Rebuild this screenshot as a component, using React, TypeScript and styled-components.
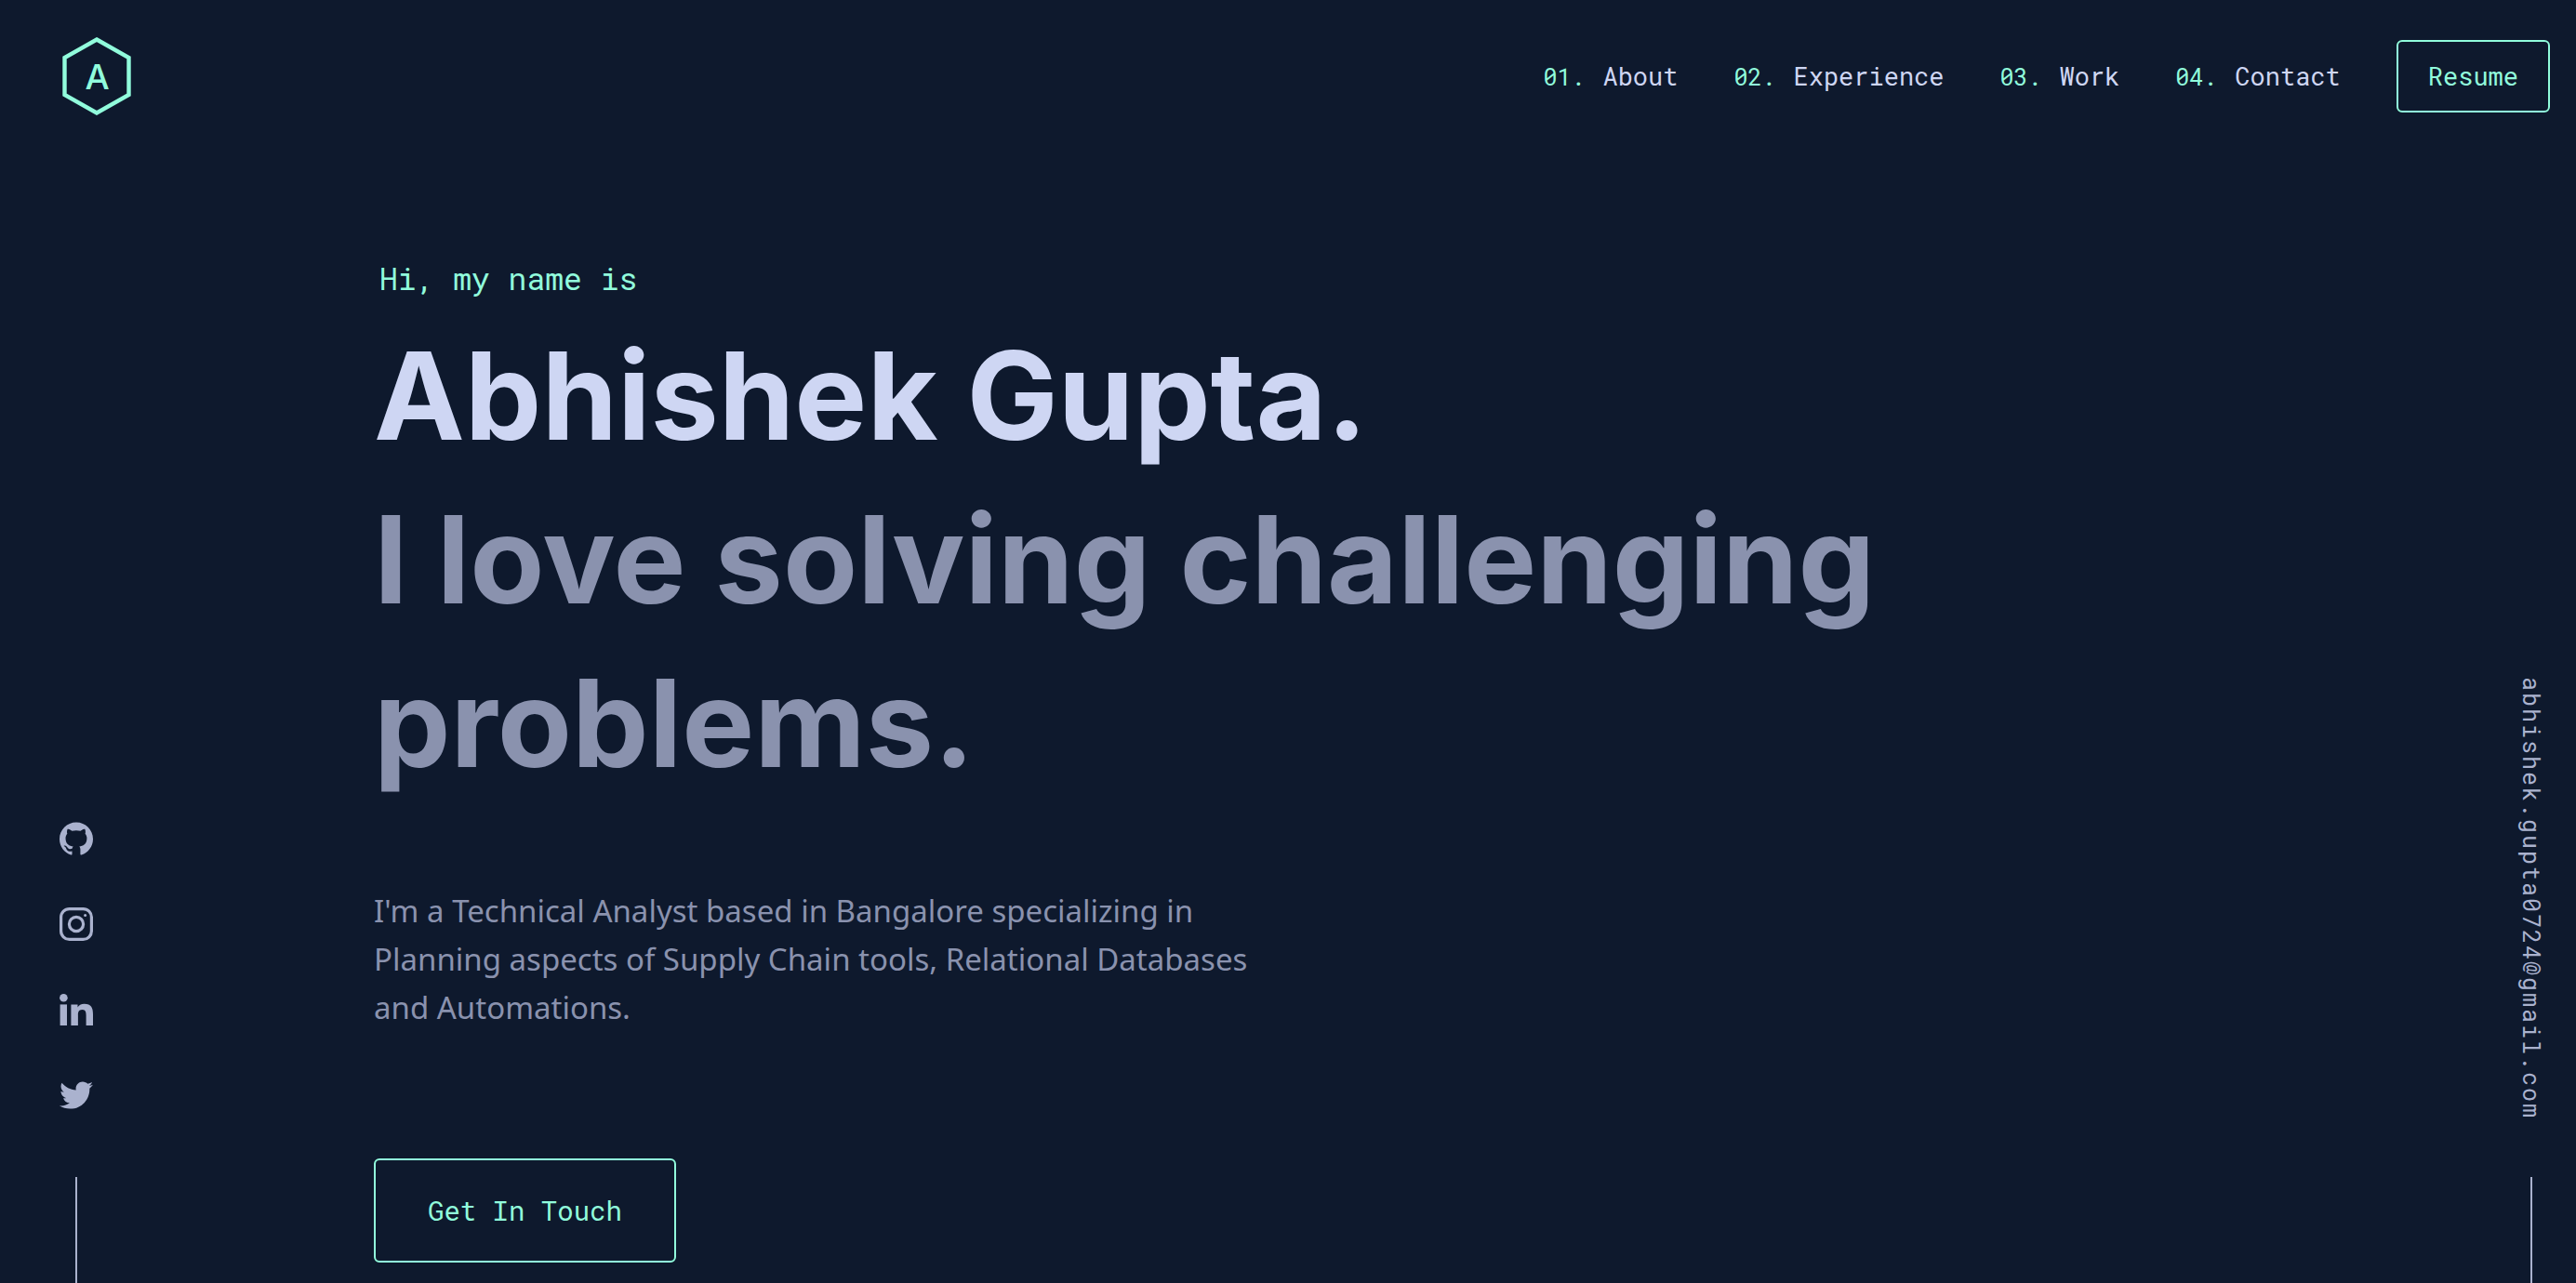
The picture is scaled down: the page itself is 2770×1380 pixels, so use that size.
import React from "react";
import styled, { createGlobalStyle } from "styled-components";
import { FaTwitter } from "react-icons/fa";
import { SiGithub } from "react-icons/si";

const color = {
  navy: "#0e192d",
  green: "#91fcdc",
  white: "#ced6f3",
  light: "#aab2ce",
  slate: "#8a92ae",
};
const mono = '"Roboto Mono", "Noto Sans Mono", "Liberation Mono", monospace';
const display = 'Inter, "Liberation Sans", sans-serif';
const body = '"Noto Sans", "Open Sans", sans-serif';

const GlobalStyle = createGlobalStyle`
  *, *::before, *::after { box-sizing: border-box; }
  body { margin: 0; background: ${color.navy}; color: ${color.slate}; font-family: ${body}; }
  a { color: inherit; text-decoration: none; }
  ul, ol { margin: 0; padding: 0; list-style: none; }
`;

const Page = styled.div`
  display: flex;
  flex-direction: column;
  min-height: 100vh;
`;

const Header = styled.header`
  display: flex;
  align-items: center;
  justify-content: space-between;
  padding: 40px 28px 40px 66px;
`;

const LogoLink = styled.a`
  display: flex;
  svg { width: 76px; height: 84px; }
`;

const Nav = styled.nav`
  display: flex;
  align-items: center;
  gap: 60px;
`;

const NavList = styled.ol`
  display: flex;
  gap: 60px;
`;

const NavLink = styled.a`
  display: flex;
  align-items: baseline;
  gap: 19px;
  font: 400 27px/36px ${mono};
  color: ${color.white};
`;

const NavNumber = styled.span`
  font-size: 25px;
  color: ${color.green};
`;

const OutlineLink = styled.a<{ $large?: boolean }>`
  display: inline-block;
  padding: ${(p) => (p.$large ? "36px 56px" : "19px 32px")};
  border: 2px solid ${color.green};
  border-radius: 6px;
  font: 400 ${(p) => (p.$large ? "29px" : "27px")}/36px ${mono};
  color: ${color.green};
`;

const Columns = styled.div`
  display: flex;
  flex: 1;
`;

const Side = styled.aside<{ $width: number; $gap: number }>`
  display: flex;
  flex: none;
  flex-direction: column;
  align-items: center;
  align-self: flex-end;
  gap: ${(p) => p.$gap}px;
  width: ${(p) => p.$width}px;

  &::after {
    content: "";
    width: 2px;
    height: 114px;
    background: ${color.light};
  }
`;

const SocialList = styled.ul`
  display: flex;
  flex-direction: column;
  gap: 56px;
`;

const SocialLink = styled.a`
  display: flex;
  color: ${color.light};
  svg { width: 36px; height: 36px; }
`;

const EmailLink = styled.a`
  writing-mode: vertical-rl;
  font: 400 25px/32px ${mono};
  letter-spacing: 2px;
  color: ${color.light};
`;

const Hero = styled.main`
  flex: 1;
  padding: 111px 306px 22px 238px;
`;

const Greeting = styled.p`
  margin: 0 0 15px 6px;
  font: 400 33px/48px ${mono};
  color: ${color.green};
`;

const Title = styled.h1`
  margin: 0;
  font: 700 131px/176px ${display};
  color: ${color.white};
`;

const Subtitle = styled.h2`
  max-width: 1800px;
  margin: 0;
  font: 700 131px/176px ${display};
  color: ${color.slate};
`;

const Intro = styled.p`
  max-width: 1000px;
  margin: 88px 0 136px;
  font: 400 33px/52px ${body};
`;

const Logo = () => (
  <svg viewBox="0 0 76 84" fill="none" aria-hidden="true">
    <path d="M38 2.5 L72.5 22 V62 L38 81.5 L3.5 62 V22 Z" stroke={color.green} strokeWidth="4.4" />
    <text x="38.5" y="56" textAnchor="middle" fontFamily={display} fontSize="37" fontWeight="500" fill={color.green}>
      A
    </text>
  </svg>
);

const InstagramIcon = () => (
  <svg viewBox="0 0 36 36" fill="none" stroke="currentColor" aria-hidden="true">
    <rect x="1.6" y="1.6" width="32.8" height="32.8" rx="9" strokeWidth="3.2" />
    <circle cx="18" cy="18" r="7.6" strokeWidth="3.2" />
    <circle cx="27.6" cy="8.4" r="1.5" fill="currentColor" stroke="none" />
  </svg>
);

const LinkedInIcon = () => (
  <svg viewBox="0 0 36 36" fill="currentColor" aria-hidden="true">
    <circle cx="4.4" cy="5.2" r="4.3" />
    <path d="M0.6 12.4 H8 V35 H0.6 Z" />
    <path d="M12.4 12.4 H19.5 V15.4 C20.7 13.3 23.3 11.8 26.6 11.8 C34.2 11.8 36 16.4 36 22.8 V35 H28.6 V24 C28.6 21.3 28.4 18 24.4 18 C20.5 18 19.9 21 19.9 23.8 V35 H12.4 Z" />
  </svg>
);

const sections = ["About", "Experience", "Work", "Contact"];

const socials = [
  { name: "GitHub", icon: <SiGithub /> },
  { name: "Instagram", icon: <InstagramIcon /> },
  { name: "LinkedIn", icon: <LinkedInIcon /> },
  { name: "Twitter", icon: <FaTwitter /> },
];

export default function App() {
  return (
    <Page>
      <GlobalStyle />
      <Header>
        <LogoLink href="#home" aria-label="Home">
          <Logo />
        </LogoLink>
        <Nav>
          <NavList>
            {sections.map((name, i) => (
              <li key={name}>
                <NavLink href={`#${name.toLowerCase()}`}>
                  <NavNumber>{`0${i + 1}.`}</NavNumber>
                  {name}
                </NavLink>
              </li>
            ))}
          </NavList>
          <OutlineLink href="#resume">Resume</OutlineLink>
        </Nav>
      </Header>
      <Columns>
        <Side $width={164} $gap={70}>
          <SocialList>
            {socials.map(({ name, icon }) => (
              <li key={name}>
                <SocialLink href={`#${name.toLowerCase()}`} aria-label={name}>
                  {icon}
                </SocialLink>
              </li>
            ))}
          </SocialList>
        </Side>
        <Hero>
          <Greeting>Hi, my name is</Greeting>
          <Title>Abhishek Gupta.</Title>
          <Subtitle>I love solving challenging problems.</Subtitle>
          <Intro>
            I'm a Technical Analyst based in Bangalore specializing in Planning aspects of Supply Chain tools,
            Relational Databases and Automations.
          </Intro>
          <OutlineLink $large href="mailto:abhishek.gupta0724@gmail.com">
            Get In Touch
          </OutlineLink>
        </Hero>
        <Side $width={96} $gap={62}>
          <EmailLink href="mailto:abhishek.gupta0724@gmail.com">abhishek.gupta0724@gmail.com</EmailLink>
        </Side>
      </Columns>
    </Page>
  );
}
